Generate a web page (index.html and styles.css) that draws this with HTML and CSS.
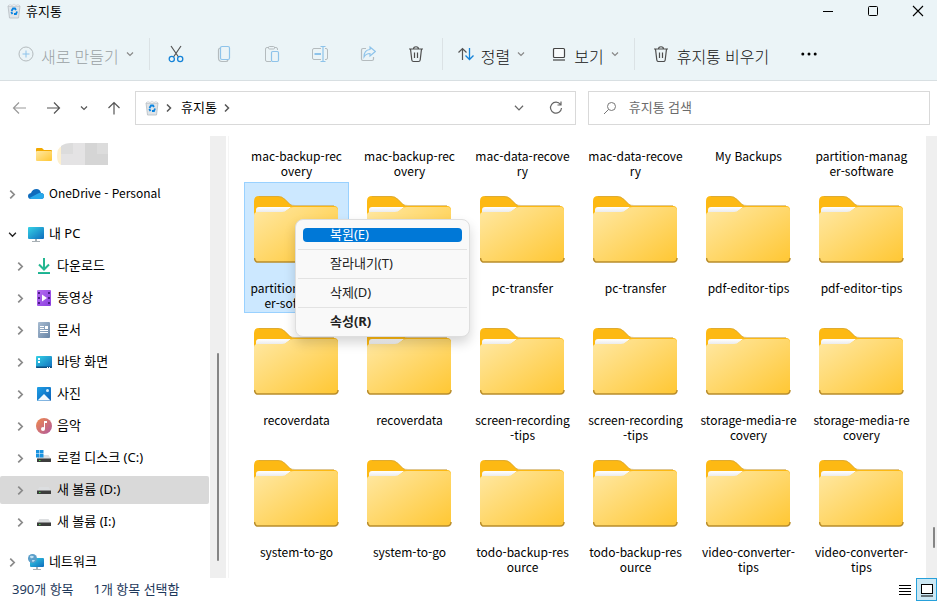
FILE: index.html
```html
<!DOCTYPE html>
<html lang="ko">
<head>
<meta charset="UTF-8">
<meta name="viewport" content="width=device-width, initial-scale=1.0">
<title>휴지통</title>
<link rel="stylesheet" href="styles.css">
</head>
<body>

<!-- shared icons -->
<svg class="defs" aria-hidden="true">
    <defs>
        <linearGradient id="gFront" x1="0" y1="0" x2="1" y2="1">
            <stop offset="0" stop-color="#ffe8a3"/>
            <stop offset="1" stop-color="#ffc733"/>
        </linearGradient>
        <linearGradient id="gPaper" x1="0" y1="0" x2="0" y2="1">
            <stop offset="0" stop-color="#ffffff"/>
            <stop offset="1" stop-color="#dcdcdc"/>
        </linearGradient>
        <linearGradient id="gScreen" x1="0" y1="0" x2="1" y2="1">
            <stop offset="0" stop-color="#35d2e6"/>
            <stop offset="1" stop-color="#0f6cbd"/>
        </linearGradient>
        <linearGradient id="gDown" x1="0" y1="0" x2="0" y2="1">
            <stop offset="0" stop-color="#2fc48a"/>
            <stop offset="1" stop-color="#12a59c"/>
        </linearGradient>
        <linearGradient id="gVideo" x1="0" y1="0" x2="1" y2="1">
            <stop offset="0" stop-color="#b66df0"/>
            <stop offset="1" stop-color="#8b3fe0"/>
        </linearGradient>
        <linearGradient id="gDoc" x1="0" y1="0" x2="1" y2="1">
            <stop offset="0" stop-color="#a9bdd2"/>
            <stop offset="1" stop-color="#6784a6"/>
        </linearGradient>
        <linearGradient id="gPic" x1="0" y1="0" x2="1" y2="1">
            <stop offset="0" stop-color="#1ea0e6"/>
            <stop offset="1" stop-color="#0c5fb8"/>
        </linearGradient>
        <linearGradient id="gMusic" x1="0" y1="0" x2="1" y2="1">
            <stop offset="0" stop-color="#f08a4b"/>
            <stop offset="1" stop-color="#b0599f"/>
        </linearGradient>
    </defs>
    <symbol id="folder" viewBox="0 0 85 67">
        <path d="M0 5Q0 0 5 0H24Q28 0 31 3L36 8Q38 10 41 10H80Q84 10 84 14V30H0Z" fill="#fdb913"/>
        <path d="M5 0.5H24Q28 0.5 31 3.500L36 8.500Q38 9.500 41 9.500H80" fill="none" stroke="#c9a24a" stroke-opacity="0.6"/>
        <path d="M2 20V14Q2 11 5 11H37L31 16H6Z" fill="url(#gPaper)"/>
        <path d="M0 19Q0 16 4 16H28Q31 16 33 14L36 12Q37 11 40 11H81Q84 11 84 15V62Q84 66 80 66H4Q0 66 0 62Z" fill="url(#gFront)"/>
        <path d="M0.500 62Q1 66 4 66H80Q84 66 84 62" fill="none" stroke="#b98d2b" stroke-width="1.500"/>
    </symbol>
    <symbol id="bin" viewBox="0 0 14 16">
        <path d="M1 3H13L11.500 15H2.500Z" fill="#dfe4e8" stroke="#b5bcc1" stroke-width="0.800"/>
        <path d="M1 3L3 1.500L5 2.500L7 1L9 2.500L11 1.500L13 3Z" fill="#fff" stroke="#c2c8cc" stroke-width="0.600"/>
        <path d="M4.500 8L6 5.500H8L9 7M10 8.500L9 11H7M5.500 11L4.200 9" fill="none" stroke="#0a84e0" stroke-width="1.800"/>
    </symbol>
    <symbol id="trash" viewBox="0 0 16 16">
        <path d="M1 3H15M5.500 3C5.500 0 10.500 0 10.500 3M2.500 3L3.800 14Q4 15.500 5.500 15.500H10.500Q12 15.500 12.200 14L13.500 3M6.500 6.500V12M9.500 6.500V12" fill="none" stroke="#4d4d4d" stroke-width="1.200"/>
    </symbol>
    <symbol id="down" viewBox="0 0 8 8">
        <path d="M1 2.500L4 5.500L7 2.500" fill="none" stroke="currentColor" stroke-width="1.200"/>
    </symbol>
    <symbol id="right" viewBox="0 0 8 8">
        <path d="M2 0.500L5.500 4L2 7.500" fill="none" stroke="currentColor" stroke-width="1.500"/>
    </symbol>
    <symbol id="drive" viewBox="0 0 16 16">
        <path d="M3.500 5H12.500L15 9H1Z" fill="#dcdee0"/>
        <rect x="1" y="8.500" width="14" height="3.500" fill="#3c3c3c"/>
        <rect x="3" y="10" width="1.500" height="1" fill="#4fd84f"/>
    </symbol>
</svg>

<div class="window">
    <header class="header">
        <div class="titlebar">
            <svg class="bin"><use href="#bin"/></svg>
            <h1 class="title">휴지통</h1>
            <div class="controls">
                <button aria-label="최소화"><svg width="12" height="12" viewBox="0 0 12 12"><path d="M1 6.500H11" stroke="#000"/></svg></button>
                <button aria-label="최대화"><svg width="12" height="12" viewBox="0 0 12 12"><rect x="1.500" y="1.500" width="9" height="9" rx="1" fill="none" stroke="#000"/></svg></button>
                <button aria-label="닫기"><svg width="12" height="12" viewBox="0 0 12 12"><path d="M1 1L11 11M11 1L1 11" stroke="#000" stroke-width="1.100"/></svg></button>
            </div>
        </div>
        <div class="toolbar">
            <button class="tool" disabled>
                <svg viewBox="0 0 16 16"><circle cx="8" cy="8" r="7" fill="none" stroke="#b4bbbe"/><path d="M8 4.500V11.500M4.500 8H11.500" stroke="#8ec3ea"/></svg>
                <span>새로 만들기</span>
                <svg class="arrow"><use href="#down"/></svg>
            </button>
            <span class="divider"></span>
            <button class="icon-tool" aria-label="잘라내기">
                <svg viewBox="0 0 16 18"><path d="M3 1L10.500 12M13 1L5.500 12" stroke="#555" stroke-width="1.200"/><circle cx="3.800" cy="14" r="2.600" fill="none" stroke="#1583d8" stroke-width="1.300"/><circle cx="12.200" cy="14" r="2.600" fill="none" stroke="#1583d8" stroke-width="1.300"/></svg>
            </button>
            <button class="icon-tool" aria-label="복사" disabled>
                <svg viewBox="0 0 16 18"><path d="M4 3Q2.500 3.500 2.500 5V13Q2.500 16.500 6 16.500H10Q11.500 16.500 12 15" fill="none" stroke="#b4bbbe" stroke-width="1.200"/><rect x="4.500" y="1.500" width="9" height="13" rx="1.500" fill="none" stroke="#8ec3ea" stroke-width="1.200"/></svg>
            </button>
            <button class="icon-tool" aria-label="붙여넣기" disabled>
                <svg viewBox="0 0 16 18"><path d="M7 16.500H3Q1.500 16.500 1.500 15V4Q1.500 2.500 3 2.500H5M10 2.500H12Q13.500 2.500 13.500 4V5" fill="none" stroke="#b4bbbe"/><rect x="4.500" y="1.500" width="6" height="2.500" rx="1" fill="none" stroke="#b4bbbe"/><rect x="7.500" y="6.500" width="7" height="10" rx="1.200" fill="none" stroke="#8ec3ea" stroke-width="1.200"/></svg>
            </button>
            <button class="icon-tool" aria-label="이름 바꾸기" disabled>
                <svg viewBox="0 0 16 18"><path d="M9 3.500H2Q0.500 3.500 0.500 5V13Q0.500 14.500 2 14.500H9M13 3.500H14Q15.500 3.500 15.500 5V13Q15.500 14.500 14 14.500H13" fill="none" stroke="#b4bbbe"/><path d="M8.500 1.500H13.500M11 1.500V16.500M8.500 16.500H13.500" stroke="#8ec3ea" stroke-width="1.200"/><path d="M2.500 9H9" stroke="#8ec3ea" stroke-width="2"/></svg>
            </button>
            <button class="icon-tool" aria-label="공유" disabled>
                <svg viewBox="0 0 16 18"><path d="M6 3.500H3Q1.500 3.500 1.500 5V14Q1.500 15.500 3 15.500H12Q13.500 15.500 13.500 14V12" fill="none" stroke="#b4bbbe" stroke-width="1.200"/><path d="M10 2L15.300 6.500L10 11V8.500Q6 8.500 4 12Q4 5 10 4.500Z" fill="none" stroke="#8ec3ea" stroke-width="1.100"/></svg>
            </button>
            <button class="icon-tool" aria-label="삭제">
                <svg><use href="#trash"/></svg>
            </button>
            <span class="divider"></span>
            <button class="tool">
                <svg viewBox="0 0 16 16"><path d="M4.500 14V2.500M0.500 6.500L4.500 2.500L8.500 6.500" fill="none" stroke="#555" stroke-width="1.200"/><path d="M11.500 2V13.500M7.500 9.500L11.500 13.500L15.500 9.500" fill="none" stroke="#1583d8" stroke-width="1.300"/></svg>
                <span>정렬</span>
                <svg class="arrow"><use href="#down"/></svg>
            </button>
            <button class="tool">
                <svg viewBox="0 0 16 16"><rect x="2.500" y="2.500" width="11" height="9" rx="1" fill="#f8fbfc" stroke="#444" stroke-width="1.200"/><path d="M2 14H14" stroke="#444" stroke-width="1.200"/></svg>
                <span>보기</span>
                <svg class="arrow"><use href="#down"/></svg>
            </button>
            <span class="divider"></span>
            <button class="tool wide">
                <svg><use href="#trash"/></svg>
                <span>휴지통 비우기</span>
            </button>
            <button class="tool wide" aria-label="자세히">
                <svg viewBox="0 0 16 16"><circle cx="1.800" cy="8" r="1.500"/><circle cx="8" cy="8" r="1.500"/><circle cx="14.200" cy="8" r="1.500"/></svg>
            </button>
        </div>
    </header>

    <nav class="navbar">
        <button class="nav-btn" aria-label="뒤로" disabled><svg viewBox="0 0 14 14"><path d="M14 7H1.500M7 1.500L1.500 7L7 12.500" fill="none" stroke="#999" stroke-width="1.200"/></svg></button>
        <button class="nav-btn" aria-label="앞으로"><svg viewBox="0 0 14 14"><path d="M0 7H12.500M7 1.500L12.500 7L7 12.500" fill="none" stroke="#555" stroke-width="1.200"/></svg></button>
        <button class="nav-btn small" aria-label="최근 위치"><svg><use href="#down"/></svg></button>
        <button class="nav-btn" aria-label="위로"><svg viewBox="0 0 14 14"><path d="M7 13.500V1.500M1.500 7L7 1.500L12.500 7" fill="none" stroke="#555" stroke-width="1.200"/></svg></button>
        <div class="address">
            <svg class="bin"><use href="#bin"/></svg>
            <svg class="crumb"><use href="#right"/></svg>
            <a class="path" href="#">휴지통</a>
            <svg class="crumb"><use href="#right"/></svg>
            <button class="address-btn first" aria-label="펼치기"><svg width="12" height="12" viewBox="0 0 8 8"><path d="M1.300 2.500L4 5.300L6.700 2.500" fill="none" stroke="#666" stroke-width="0.800"/></svg></button>
            <button class="address-btn" aria-label="새로 고침"><svg width="14" height="14" viewBox="0 0 14 14"><path d="M11.500 3.500A5.500 5.500 0 1 0 12.500 7M12 0.500V4H8.500" fill="none" stroke="#666" stroke-width="1.200"/></svg></button>
        </div>
        <label class="search">
            <svg width="14" height="14" viewBox="0 0 14 14"><circle cx="8.500" cy="5.500" r="4" fill="none" stroke="#777"/><path d="M5.500 8.500L1 13" stroke="#777"/></svg>
            <input type="search" placeholder="휴지통 검색" aria-label="휴지통 검색">
        </label>
    </nav>

    <div class="body">
        <aside class="sidebar">
            <ul class="tree">
                <li class="node sub">
                    <span class="chev"></span>
                    <svg class="icon" viewBox="0 0 16 16"><path d="M0 3Q0 2 1 2H6L8 4H15Q16 4 16 5V7H0Z" fill="#f2a900"/><rect y="5" width="16" height="10" rx="1" fill="url(#gFront)"/></svg>
                    <svg class="masked" viewBox="0 0 51 22">
                        <path d="M4 22Q0 20 0 13Q0 5 5 3V22Z" fill="#fdf0d0"/>
                        <path d="M4 3Q8 0 14 0H51V22H4Z" fill="#dcdcdc"/>
                        <path d="M4 11H16V22H4ZM16 0H28V22H16Z" fill="#e4e3e4"/>
                        <path d="M28 0H40V11H51V22H28Z" fill="#d5d5d5"/>
                    </svg>
                </li>
                <li class="node gap">
                    <svg class="chev"><use href="#right"/></svg>
                    <svg class="icon" viewBox="0 0 16 16"><path d="M3 13Q0 13 0 10Q0 7.500 3 7Q4.500 3 8.500 3Q12 3 13 7Q16 7 16 10Q16 13 13 13Z" fill="#0f6cbd"/><path d="M3 13L1.500 12L10 7.500Q12 6.500 13 7Q16 7.500 16 10Q16 13 13 13Z" fill="#28a8ea"/></svg>
                    <span class="latin">OneDrive - Personal</span>
                </li>
                <li class="node gap">
                    <svg class="chev open"><use href="#down"/></svg>
                    <svg class="icon" viewBox="0 0 16 16"><rect y="1" width="16" height="12" rx="1" fill="url(#gScreen)"/><path d="M7 13H9V15H12V16H4V15H7Z" fill="#a8b0b5"/></svg>
                    <span>내 PC</span>
                </li>
                <li class="node sub">
                    <svg class="chev"><use href="#right"/></svg>
                    <svg class="icon" viewBox="0 0 16 16"><path d="M8 0V11M3 6.500L8 11.500L13 6.500" fill="none" stroke="#24b791" stroke-width="2"/><rect x="2" y="14" width="12" height="2" fill="url(#gDown)"/></svg>
                    <span>다운로드</span>
                </li>
                <li class="node sub">
                    <svg class="chev"><use href="#right"/></svg>
                    <svg class="icon" viewBox="0 0 16 16"><rect x="1" width="14" height="16" rx="1" fill="url(#gVideo)"/><path d="M2 2H4V4H2ZM2 7H4V9H2ZM2 12H4V14H2ZM12 2H14V4H12ZM12 7H14V9H12ZM12 12H14V14H12Z" fill="#4a1d85"/><path d="M6 4.500L11 8L6 11.500Z" fill="#fff"/></svg>
                    <span>동영상</span>
                </li>
                <li class="node sub">
                    <svg class="chev"><use href="#right"/></svg>
                    <svg class="icon" viewBox="0 0 16 16"><rect x="2" width="12" height="16" rx="1" fill="url(#gDoc)"/><path d="M4 4.500H8M4 6.500H8M4 8.500H12M4 10.500H12" stroke="#fff"/><rect x="9" y="4" width="3" height="3" fill="#fff"/></svg>
                    <span>문서</span>
                </li>
                <li class="node sub">
                    <svg class="chev"><use href="#right"/></svg>
                    <svg class="icon" viewBox="0 0 16 16"><rect y="2" width="16" height="12" rx="1" fill="url(#gScreen)"/><path d="M0 12.500H16V13Q16 14 15 14H1Q0 14 0 13Z" fill="#0b4d80"/><path d="M2 4H4V6H2ZM2 7H4V9H2ZM11 13H12V14H11ZM13 13H14V14H13Z" fill="#fff"/></svg>
                    <span>바탕 화면</span>
                </li>
                <li class="node sub">
                    <svg class="chev"><use href="#right"/></svg>
                    <svg class="icon" viewBox="0 0 16 16"><rect x="1" y="1" width="14" height="14" rx="1" fill="url(#gPic)"/><path d="M1.500 14.500L8 8L14.500 14.500Z" fill="#f4f9fd"/><circle cx="11.500" cy="4.500" r="1.500" fill="#d5ecfa"/></svg>
                    <span>사진</span>
                </li>
                <li class="node sub">
                    <svg class="chev"><use href="#right"/></svg>
                    <svg class="icon" viewBox="0 0 16 16"><circle cx="8" cy="8" r="8" fill="url(#gMusic)"/><path d="M8 3H11V5H9V11H8Z" fill="#fff"/><circle cx="7" cy="11" r="2" fill="#fff"/></svg>
                    <span>음악</span>
                </li>
                <li class="node sub">
                    <svg class="chev"><use href="#right"/></svg>
                    <svg class="icon" viewBox="0 0 16 16"><use href="#drive" width="16" height="16"/><path d="M0 0H3.500V3.500H0ZM4 0H7.500V3.500H4ZM0 4H3.500V7.500H0ZM4 4H7.500V7.500H4Z" fill="#1a93e0"/></svg>
                    <span>로컬 디스크 (C:)</span>
                </li>
                <li class="node sub selected">
                    <svg class="chev"><use href="#right"/></svg>
                    <svg class="icon"><use href="#drive"/></svg>
                    <span>새 볼륨 (D:)</span>
                </li>
                <li class="node sub">
                    <svg class="chev"><use href="#right"/></svg>
                    <svg class="icon"><use href="#drive"/></svg>
                    <span>새 볼륨 (I:)</span>
                </li>
                <li class="node gap">
                    <svg class="chev"><use href="#right"/></svg>
                    <svg class="icon" viewBox="0 0 16 16"><rect x="2" y="4" width="14" height="9" rx="1" fill="url(#gScreen)"/><path d="M8 13H10V15H13V16H5V15H8Z" fill="#a8b0b5"/><circle cx="4.500" cy="4.500" r="4.500" fill="#5b9ec9"/><path d="M2 2Q5 1 6 3Q4 5 2.500 4ZM4 6H7Q6 8 4.500 8Z" fill="#c3e2f2"/></svg>
                    <span>네트워크</span>
                </li>
            </ul>
            <div class="scroll"><span class="thumb"></span></div>
        </aside>

        <main class="content">
            <ul class="tiles">
                <li class="tile cut">mac-backup-rec<br>overy</li>
                <li class="tile cut">mac-backup-rec<br>overy</li>
                <li class="tile cut">mac-data-recove<br>ry</li>
                <li class="tile cut">mac-data-recove<br>ry</li>
                <li class="tile cut">My Backups</li>
                <li class="tile cut">partition-manag<br>er-software</li>

                <li class="tile selected"><svg><use href="#folder"/></svg>partition-manag<br>er-software</li>
                <li class="tile"><svg><use href="#folder"/></svg></li>
                <li class="tile"><svg><use href="#folder"/></svg>pc-transfer</li>
                <li class="tile"><svg><use href="#folder"/></svg>pc-transfer</li>
                <li class="tile"><svg><use href="#folder"/></svg>pdf-editor-tips</li>
                <li class="tile"><svg><use href="#folder"/></svg>pdf-editor-tips</li>

                <li class="tile"><svg><use href="#folder"/></svg>recoverdata</li>
                <li class="tile"><svg><use href="#folder"/></svg>recoverdata</li>
                <li class="tile"><svg><use href="#folder"/></svg>screen-recording<br>-tips</li>
                <li class="tile"><svg><use href="#folder"/></svg>screen-recording<br>-tips</li>
                <li class="tile"><svg><use href="#folder"/></svg>storage-media-re<br>covery</li>
                <li class="tile"><svg><use href="#folder"/></svg>storage-media-re<br>covery</li>

                <li class="tile"><svg><use href="#folder"/></svg>system-to-go</li>
                <li class="tile"><svg><use href="#folder"/></svg>system-to-go</li>
                <li class="tile"><svg><use href="#folder"/></svg>todo-backup-res<br>ource</li>
                <li class="tile"><svg><use href="#folder"/></svg>todo-backup-res<br>ource</li>
                <li class="tile"><svg><use href="#folder"/></svg>video-converter-<br>tips</li>
                <li class="tile"><svg><use href="#folder"/></svg>video-converter-<br>tips</li>
            </ul>
            <div class="scroll narrow"><span class="thumb"></span></div>
        </main>
    </div>

    <footer class="status">
        <span>390개 항목</span>
        <span>1개 항목 선택함</span>
        <div class="views">
            <button class="view" aria-label="자세히 보기"><svg width="14" height="14" viewBox="0 0 14 14"><path d="M1 2.500H13M1 5.500H13M1 8.500H13M1 11.500H13" stroke="#000"/></svg></button>
            <button class="view active" aria-label="큰 아이콘"><svg width="14" height="14" viewBox="0 0 14 14"><rect x="1.500" y="1.500" width="11" height="9" fill="#fff" stroke="#000"/><path d="M1 13H13" stroke="#000"/></svg></button>
        </div>
    </footer>
</div>

<div class="menu" role="menu">
    <div class="menu-row"><button class="menu-item active" role="menuitem">복원(E)</button></div>
    <div class="menu-row"><button class="menu-item" role="menuitem">잘라내기(T)</button></div>
    <div class="menu-row"><button class="menu-item" role="menuitem">삭제(D)</button></div>
    <div class="menu-row"><button class="menu-item bold" role="menuitem">속성(R)</button></div>
</div>

</body>
</html>
```
FILE: styles.css
```css
* {
    box-sizing: border-box;
}
body {
    margin: 0;
    font-family: "Noto Sans", "Noto Sans CJK KR", sans-serif;
    font-size: 13px;
    line-height: 16px;
    color: #000;
    background: #fff;
}
button {
    display: flex;
    align-items: center;
    justify-content: center;
    padding: 0;
    border: none;
    background: none;
    font: inherit;
    color: inherit;
}
ul {
    margin: 0;
    padding: 0;
    list-style: none;
}
svg {
    flex: none;
}
.defs {
    position: absolute;
    width: 0;
    height: 0;
}
.window {
    display: flex;
    flex-direction: column;
    height: 100vh;
    overflow: hidden;
}

/* title bar + toolbar */
.header {
    padding-bottom: 2px;
    background: #ebf4f7;
    border-bottom: 1px solid #d8dfe2;
}
.titlebar {
    display: flex;
    align-items: center;
    height: 22px;
    padding-left: 7px;
}
.bin {
    width: 14px;
    height: 16px;
}
.title {
    margin: 0 0 0 5px;
    font-size: 13px;
    font-weight: normal;
}
.controls {
    display: flex;
    gap: 7px;
    margin-left: auto;
}
.controls button {
    width: 38px;
    height: 22px;
}
.toolbar {
    display: flex;
    align-items: center;
    height: 48px;
    margin-top: 8px;
    padding-left: 5px;
}
.tool {
    gap: 7px;
    height: 40px;
    padding: 0 13px;
    font-size: 16px;
    line-height: 20px;
    font-weight: 300;
    white-space: nowrap;
    color: #111;
}
.tool.wide {
    gap: 8px;
    padding: 0 16px;
}
.tool span {
    padding-top: 6px;
}
.tool svg {
    width: 16px;
    height: 16px;
}
.tool .arrow {
    width: 8px;
    height: 8px;
    color: #888;
}
.tool:disabled {
    color: #9aa1a4;
}
.icon-tool {
    width: 48px;
    height: 40px;
}
.icon-tool svg {
    width: 16px;
    height: 18px;
}
.divider {
    width: 1px;
    height: 32px;
    margin: 0 2px;
    background: #dbe2e5;
}

/* navigation row */
.navbar {
    display: flex;
    align-items: center;
    height: 55px;
    padding: 0 7px 1px 5px;
}
.nav-btn {
    width: 28px;
    height: 28px;
    margin-right: 7px;
}
.nav-btn svg {
    width: 14px;
    height: 14px;
}
.nav-btn.small {
    width: 18px;
    color: #555;
}
.nav-btn.small svg {
    width: 8px;
    height: 8px;
}
.address,
.search {
    display: flex;
    align-items: center;
    height: 34px;
    border: 1px solid #d9d9d9;
}
.address {
    flex: 1;
    padding: 0 5px 0 9px;
}
.crumb {
    width: 8px;
    height: 8px;
    margin: 0 8px 0 6px;
    color: #555;
}
.path {
    padding-bottom: 2px;
    color: inherit;
    text-decoration: none;
}
.address-btn {
    width: 28px;
    height: 28px;
}
.address-btn.first {
    margin: 0 9px 0 auto;
}
.search {
    width: 37%;
    gap: 12px;
    margin-left: 12px;
    padding: 0 14px;
}
.search input {
    flex: 1;
    min-width: 0;
    padding: 0 0 2px;
    border: none;
    outline: none;
    font: inherit;
    background: none;
}
.search input::placeholder {
    color: #6b6b6b;
}

/* sidebar */
.body {
    display: flex;
    flex: 1;
    min-height: 0;
}
.sidebar {
    display: flex;
    width: 229px;
    padding-right: 2px;
    border-right: 1px solid #f5f5f5;
    overflow: hidden;
}
.tree {
    display: flex;
    flex: 1;
    flex-direction: column;
    gap: 4px;
    padding: 4px 1px 0 0;
}
.node {
    display: flex;
    flex: none;
    align-items: center;
    height: 28px;
    padding-left: 8px;
    border-radius: 2px;
    white-space: nowrap;
}
.node span {
    padding-bottom: 2px;
}
.node.sub {
    padding-left: 16px;
}
.node.gap {
    margin-top: 8px;
}
.node.selected {
    background: #d9d9d9;
}
.chev {
    width: 9px;
    height: 9px;
    margin-right: 11px;
    color: #8a8a8a;
}
.chev.open {
    color: #222;
}
.icon {
    width: 16px;
    height: 16px;
    margin-right: 5px;
}
.masked {
    width: 51px;
    height: 22px;
}
.latin {
    font-family: "Noto Sans CJK KR", sans-serif;
    font-size: 12px;
}
.scroll {
    display: flex;
    flex: none;
    flex-direction: column;
    align-items: center;
    justify-content: flex-end;
    width: 16px;
    padding-bottom: 17px;
    background: #efefef;
}
.thumb {
    width: 2px;
    height: 208px;
    border-radius: 1px;
    background: #858585;
}
.scroll.narrow {
    width: 11px;
    padding: 0 0 30px 5px;
}
.scroll.narrow .thumb {
    height: 21px;
}

/* folders */
.content {
    display: flex;
    flex: 1;
    min-width: 0;
}
.tiles {
    display: grid;
    flex: 1;
    grid-template-columns: repeat(auto-fill, 105px);
    gap: 1px 8px;
    align-content: start;
    padding-left: 15px;
}
.tile {
    height: 131px;
    padding-top: 13px;
    border: 1px solid transparent;
    font-family: "Noto Sans CJK KR", sans-serif;
    font-size: 12px;
    line-height: 15px;
    text-align: center;
    white-space: nowrap;
}
.tile svg {
    display: block;
    width: 85px;
    height: 67px;
    margin: 0 auto 17px;
}
.tile.cut {
    height: 45px;
    padding-top: 11px;
}
.tile.selected {
    background: #cce8ff;
    border-color: #99d1ff;
}

/* status bar */
.status {
    display: flex;
    flex: none;
    align-items: center;
    gap: 20px;
    height: 23px;
    padding-left: 12px;
    color: #1e395b;
}
.status span {
    padding-bottom: 2px;
}
.views {
    display: flex;
    gap: 1px;
    margin-left: auto;
}
.view {
    width: 21px;
    height: 23px;
}
.view.active {
    background: #cce8f4;
    border: 1px solid #26a0da;
}

/* context menu */
.menu {
    position: absolute;
    left: 295px;
    top: 219px;
    width: 175px;
    padding: 0 2px;
    border: 1px solid #dedede;
    border-radius: 8px;
    background: #f9f9f9;
    box-shadow: 0 6px 12px rgba(0, 0, 0, 0.16);
}
.menu-row {
    height: 29px;
    padding: 8px 5px 0;
}
.menu-row + .menu-row {
    padding-top: 7px;
    border-top: 1px solid #e3e3e3;
}
.menu-item {
    justify-content: flex-start;
    width: 100%;
    height: 14px;
    padding: 0 0 2px 27px;
    border-radius: 4px;
    line-height: 14px;
    color: #222;
}
.menu-item.active {
    background: #0078d7;
    color: #fff;
}
.menu-item.bold {
    font-weight: bold;
}
```
